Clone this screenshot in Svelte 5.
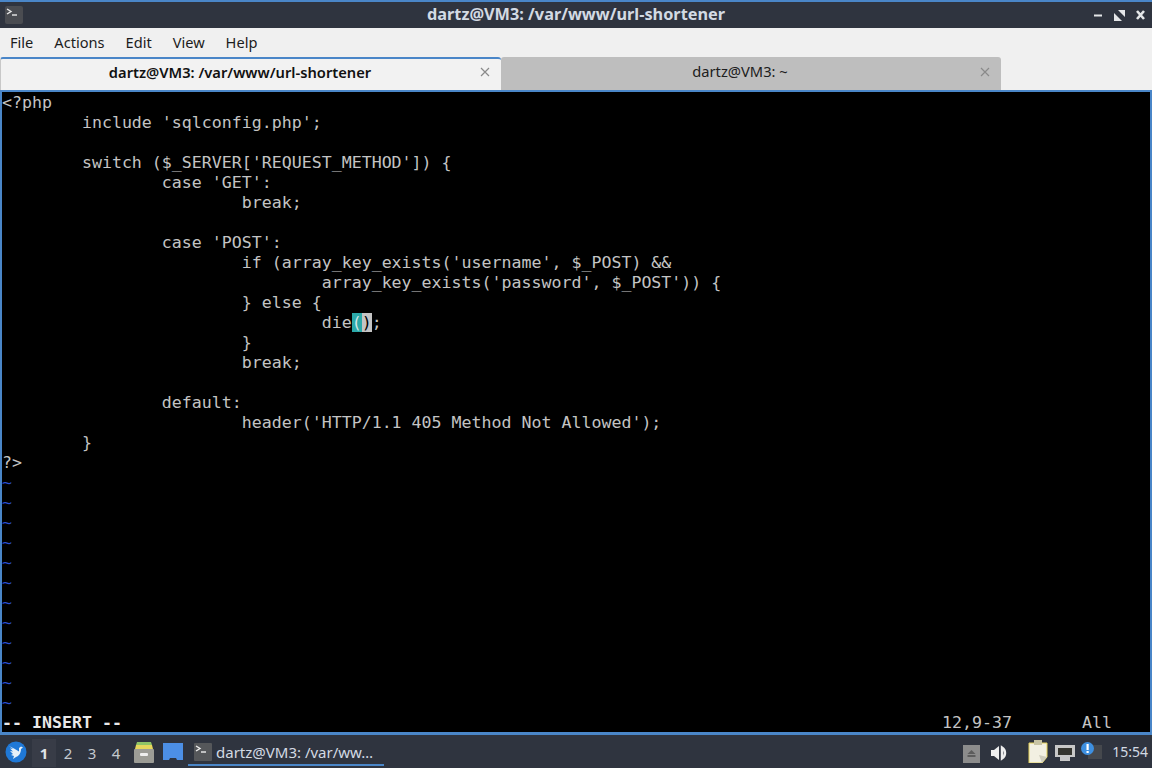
<script>
	const menus = ['File', 'Actions', 'Edit', 'View', 'Help'];
	const desktops = ['1', '2', '3', '4'];
	const code = `<?php
        include 'sqlconfig.php';

        switch ($_SERVER['REQUEST_METHOD']) {
                case 'GET':
                        break;

                case 'POST':
                        if (array_key_exists('username', $_POST) &&
                                array_key_exists('password', $_POST')) {
                        } else {
                                die@
                        }
                        break;

                default:
                        header('HTTP/1.1 405 Method Not Allowed');
        }
?>`.split('\n');
	const tildes = Array(12).fill('~');
</script>

<div class="screen">
	<header class="titlebar">
		<span class="app-icon">
			<svg width="18" height="18" viewBox="0 0 18 18"><rect width="18" height="18" rx="2" fill="#4a4c51" /><path d="M2 3l4 2.5-4 2.5" fill="none" stroke="#e8e8e8" stroke-width="1.4" /><path d="M7 9h5" stroke="#e8e8e8" stroke-width="1.4" /></svg>
		</span>
		<span class="title">dartz@VM3: /var/www/url-shortener</span>
		<span class="win-btns">
			<svg width="58" height="14" viewBox="0 0 58 14">
				<path d="M1 7.5h8" stroke="#e4e6e8" stroke-width="2" />
				<path d="M25 2h7v7zM21 5v8h8z" fill="#e4e6e8" />
				<path d="M44 3l7 8M51 3l-7 8" stroke="#e4e6e8" stroke-width="2.6" />
			</svg>
		</span>
	</header>

	<nav class="menubar">
		{#each menus as m}
			<span>{m}</span>
		{/each}
	</nav>

	<div class="tabs">
		<div class="tab active">
			<span class="tab-label">dartz@VM3: /var/www/url-shortener</span>
			<svg class="tab-x" width="10" height="10" viewBox="0 0 10 10"><path d="M1 1l8 8M9 1l-8 8" stroke="#8a8a8a" stroke-width="1.2" /></svg>
		</div>
		<div class="tab">
			<span class="tab-label">dartz@VM3: ~</span>
			<svg class="tab-x" width="10" height="10" viewBox="0 0 10 10"><path d="M1 1l8 8M9 1l-8 8" stroke="#8a8a8a" stroke-width="1.2" /></svg>
		</div>
	</div>

	<main class="term">
		<div class="buffer">
			{#each code as line}
				<div class="line">{#if line.includes('@')}{line.split('@')[0]}<span class="cur-a">(</span><span class="cur-b">)</span>;{:else}{line}{/if}</div>
			{/each}
			{#each tildes as t}
				<div class="line tilde">{t}</div>
			{/each}
		</div>
		<div class="status">
			<span class="mode">-- INSERT --</span>
			<span class="pos">12,9-37</span>
			<span class="all">All</span>
		</div>
	</main>

	<footer class="panel">
		<svg class="logo" width="22" height="22" viewBox="0 0 22 22">
			<circle cx="11" cy="11" r="10.5" fill="#1f78d6" />
			<path d="M4 5l5 2.5 5 3V7l2-1.5 2 1-2 1.5c0 4-2 7-5 8l-3 2 1-3-3-1 2-1-3-3 3 .5-3-3 3 .5z" fill="#e6f0f8" />
		</svg>
		<div class="pager">
			{#each desktops as d, i}
				<span class:cur={i === 0}>{d}</span>
			{/each}
		</div>
		<svg class="ql first" width="22" height="22" viewBox="0 0 22 22">
			<path d="M4 1h14l1 3H3z" fill="#8fc466" />
			<path d="M3 4h16l1 4H2z" fill="#e6d75c" />
			<rect x="1" y="8" width="20" height="14" rx="1" fill="#9c9c96" />
			<rect x="7" y="12" width="8" height="3" rx="1" fill="#eee" />
		</svg>
		<svg class="ql" width="22" height="22" viewBox="0 0 22 22">
			<path d="M1 2h20v17h-6l-1-2H8l-1 2H1z" fill="#4c8fe6" />
		</svg>
		<div class="task">
			<svg width="18" height="18" viewBox="0 0 18 18"><rect width="18" height="18" rx="1" fill="#55575a" /><path d="M2 3l4 2.5-4 2.5" fill="none" stroke="#eee" stroke-width="1.4" /><path d="M7 9h5" stroke="#eee" stroke-width="1.4" /></svg>
			<span>dartz@VM3: /var/ww…</span>
		</div>
		<div class="tray">
			<span class="eject"><svg width="17" height="18" viewBox="0 0 17 18"><path d="M8.5 5l4 4h-8z" fill="#5c5c5c" /><rect x="4.5" y="10" width="8" height="2" fill="#5c5c5c" /></svg></span>
			<svg class="vol" width="17" height="16" viewBox="0 0 17 16"><path d="M0 5h3l5-4v14l-5-4H0z" fill="#eee" /><path d="M11 2.5a6.5 6.5 0 0 1 0 11z" fill="none" stroke="#eee" stroke-width="2.4" /></svg>
			<svg class="clip" width="20" height="23" viewBox="0 0 20 23"><path d="M1 3h18v14l-5 6H1z" fill="#f2f0e2" stroke="#e6d25a" /><path d="M14 23l-3-8 8 2z" fill="#cfcdbd" /><rect x="6" y="0" width="8" height="5" fill="#c8c4a4" /></svg>
			<svg class="net" width="20" height="17" viewBox="0 0 20 17"><path d="M0 1h20v12h-5v4H5v-4H0z" fill="#c8c8c8" /><rect x="3" y="4" width="14" height="7" fill="#35352f" /></svg>
			<svg class="note" width="21" height="18" viewBox="0 0 21 18"><rect x="7" y="3" width="14" height="14" fill="#45484d" /><circle cx="6.5" cy="6.5" r="6.5" fill="#3d8fe0" /><rect x="5.5" y="2" width="2.2" height="6" fill="#fff" /><rect x="5.5" y="9" width="2.2" height="2" fill="#fff" /></svg>
			<span class="clock">15:54</span>
		</div>
	</footer>
</div>

<style>
	:global(body) {
		margin: 0;
		background: #000;
	}

	.screen {
		width: 1152px;
		height: 768px;
		display: flex;
		flex-direction: column;
		overflow: hidden;
		font-family: 'Noto Sans', 'Open Sans', sans-serif;
	}

	.titlebar {
		height: 26px;
		border-top: 2px solid #4a86c8;
		background: #2f343f;
		display: flex;
		align-items: center;
		position: relative;
		color: #d3dae3;
		flex: none;
	}
	.app-icon {
		display: flex;
		margin-left: 5px;
	}
	.title {
		position: absolute;
		left: 0;
		right: 0;
		top: 2px;
		text-align: center;
		font-size: 16.3px;
		font-weight: 700;
		line-height: 20px;
	}
	.win-btns {
		margin-left: auto;
		margin-right: 1px;
		display: flex;
	}

	.menubar {
		height: 28px;
		flex: none;
		background: #f0f0f0;
		display: flex;
		align-items: center;
		gap: 21px;
		padding-left: 10px;
		box-sizing: border-box;
		font-size: 14.6px;
		color: #1c1c1c;
	}

	.tabs {
		height: 34px;
		flex: none;
		background: #f0f0f0;
		display: flex;
		align-items: stretch;
		padding-top: 1px;
		box-sizing: border-box;
	}
	.tab {
		width: 500px;
		box-sizing: border-box;
		background: #bebebe;
		display: flex;
		align-items: center;
		position: relative;
		font-size: 14.7px;
		color: #202020;
		border-radius: 3px 3px 0 0;
		padding-bottom: 5px;
	}
	.tab.active {
		width: 501px;
		background: #f2f2f2;
		border-top: 2px solid #4a86c8;
		border-left: 1px solid #c8c8c8;
		font-weight: 600;
		color: #111;
	}
	.tab-label {
		flex: 1;
		text-align: center;
		padding-right: 22px;
	}
	.tab-x {
		position: absolute;
		right: 11px;
		top: 10px;
	}
	.active .tab-x {
		top: 8px;
	}

	.term {
		flex: 1;
		min-height: 0;
		background: #000;
		border: 2px solid #4a86c8;
		border-bottom-width: 3px;
		display: flex;
		flex-direction: column;
		font-family: 'DejaVu Sans Mono', monospace;
		font-size: 16.6px;
		color: #c4c4c4;
		min-width: 0;
	}
	.buffer {
		flex: 1;
		min-height: 0;
		padding-top: 1px;
	}
	.line {
		height: 20px;
		line-height: 20px;
		white-space: pre;
	}
	.tilde {
		color: #2a4fd0;
	}
	.cur-a {
		background: #2ba9a9;
		color: #d0e8e8;
	}
	.cur-b {
		background: #c4c4c4;
		color: #000;
	}
	.status {
		height: 20px;
		line-height: 20px;
		flex: none;
		position: relative;
		white-space: pre;
		top: 1px;
	}
	.mode {
		font-weight: 700;
		color: #e8e8e8;
	}
	.pos {
		position: absolute;
		left: 940px;
	}
	.all {
		position: absolute;
		left: 1080px;
	}

	.panel {
		height: 33px;
		flex: none;
		background: #2f343f;
		display: flex;
		align-items: center;
		color: #d3dae3;
		font-size: 15px;
	}
	.logo {
		margin-left: 5px;
	}
	.pager {
		display: flex;
		margin-left: 5px;
		padding-top: 2px;
	}
	.pager span {
		width: 24px;
		text-align: center;
		line-height: 28px;
		color: #c4c9d0;
	}
	.pager .cur {
		background: #383c47;
		font-weight: 700;
		color: #e0e4e8;
	}
	.ql {
		margin-left: 7px;
	}
	.ql.first {
		margin-left: 5px;
	}
	.task {
		margin-left: 4px;
		width: 196px;
		box-sizing: border-box;
		display: flex;
		align-items: center;
		gap: 4px;
		padding: 5px 6px 0;
		border-bottom: 2px solid #4a86c8;
		height: 31px;
		align-self: flex-start;
	}
	.tray {
		margin-left: auto;
		display: flex;
		align-items: center;
		padding-right: 4px;
	}
	.eject {
		display: flex;
		background: #8c8c8c;
		margin-top: 4px;
	}
	.vol {
		margin-left: 11px;
		margin-top: 2px;
	}
	.clip {
		margin-left: 20px;
	}
	.net {
		margin-left: 7px;
		margin-top: 1px;
	}
	.note {
		margin-left: 6px;
		margin-bottom: 2px;
	}
	.clock {
		margin-left: 10px;
		font-size: 14px;
		color: #d3dae3;
	}
</style>
